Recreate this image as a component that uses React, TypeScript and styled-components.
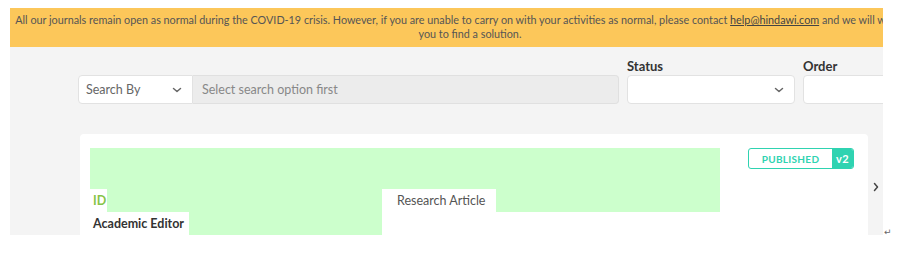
import React from "react";
import styled, { createGlobalStyle } from "styled-components";

const GlobalStyle = createGlobalStyle`
  body {
    margin: 0;
    background: #ffffff;
    font-family: "Lato", "Open Sans", sans-serif;
  }
`;

const Page = styled.div`
  display: flex;
  align-items: flex-end;
  padding: 8px 0 0 10px;
`;

const Frame = styled.div`
  width: 873px;
  height: 227px;
  overflow: hidden;
  background: #f4f4f4;
`;

const ReturnMark = styled.span`
  font-family: "DejaVu Sans", sans-serif;
  font-size: 9px;
  color: #666;
  margin: 0 0 -2px 1px;
`;

const Banner = styled.div`
  width: 920px;
  background: #fcc75a;
  color: #555;
  font-size: 10.8px;
  line-height: 14px;
  text-align: center;
  padding: 5px 0 6px;
  a {
    color: #444;
    text-decoration: underline;
  }
`;

const Filters = styled.div`
  display: flex;
  align-items: flex-end;
  gap: 8px;
  padding: 11px 0 0 68px;
`;

const Field = styled.div`
  display: flex;
  flex-direction: column;
`;

const Label = styled.span`
  font-size: 13px;
  font-weight: 700;
  color: #333;
  margin-bottom: 1px;
`;

const SearchGroup = styled.div`
  display: flex;
`;

const Select = styled.div<{ $width: number; $joined?: boolean }>`
  box-sizing: border-box;
  width: ${(p) => p.$width}px;
  height: 29px;
  background: #fff;
  border: 1px solid #e2e2e2;
  border-radius: ${(p) => (p.$joined ? "4px 0 0 4px" : "4px")};
  display: flex;
  align-items: center;
  justify-content: space-between;
  padding: 0 10px 0 7px;
  font-size: 12.5px;
  color: #666;
`;

const SearchInput = styled.div`
  box-sizing: border-box;
  width: 426px;
  height: 29px;
  background: #ececec;
  border: 1px solid #e0e0e0;
  border-left: none;
  border-radius: 0 4px 4px 0;
  display: flex;
  align-items: center;
  padding-left: 9px;
  font-size: 12.5px;
  color: #888;
`;

const CardRow = styled.div`
  display: flex;
  margin: 30px 0 0 70px;
`;

const Card = styled.div`
  position: relative;
  width: 788px;
  height: 110px;
  background: #fff;
  border-radius: 4px;
  padding: 14px 14px 0 13px;
  box-sizing: border-box;
`;

const Top = styled.div`
  display: flex;
  justify-content: flex-end;
  height: 41px;
`;

const Badge = styled.div`
  display: flex;
  height: 21px;
  box-sizing: border-box;
  border: 1px solid #2fd3b1;
  border-radius: 3px;
  overflow: hidden;
  font-size: 10px;
  font-weight: 700;
  letter-spacing: 0.3px;
`;

const BadgeText = styled.span`
  width: 83px;
  display: flex;
  align-items: center;
  justify-content: center;
  color: #2fd3b1;
`;

const BadgeVersion = styled.span`
  width: 21px;
  display: flex;
  align-items: center;
  justify-content: center;
  background: #2fd3b1;
  color: #fff;
  font-size: 11px;
`;

const InfoRow = styled.div`
  display: flex;
  height: 23px;
  align-items: center;
  font-size: 12.5px;
`;

const IdText = styled.span`
  color: #86c447;
  font-weight: 700;
  width: 304px;
`;

const TypeText = styled.span`
  color: #555;
`;

const EditorText = styled.span`
  color: #333;
  font-weight: 700;
`;

const Redaction = styled.div`
  position: absolute;
  background: #ccffcc;
`;

const Side = styled.div`
  width: 15px;
  display: flex;
  justify-content: center;
  padding-top: 48px;
  color: #444;
`;

const redactions = [
  { left: 10, top: 14, width: 630, height: 41 },
  { left: 27, top: 55, width: 275, height: 23 },
  { left: 416, top: 55, width: 224, height: 23 },
  { left: 109, top: 78, width: 193, height: 26 },
];

const Chevron = ({ down }: { down?: boolean }) => (
  <svg width="10" height="10" viewBox="0 0 10 10" fill="none">
    <path
      d={down ? "M1.5 3.5 L5 6.5 L8.5 3.5" : "M3.5 1.5 L6.5 5 L3.5 8.5"}
      stroke="currentColor"
      strokeWidth="1.5"
      strokeLinecap="round"
      strokeLinejoin="round"
    />
  </svg>
);

export default function App() {
  return (
    <>
      <GlobalStyle />
      <Page>
        <Frame>
          <Banner>
            All our journals remain open as normal during the COVID-19 crisis. However, if you are
            unable to carry on with your activities as normal, please contact{" "}
            <a>help@hindawi.com</a> and we will work with you to find a solution.
          </Banner>
          <Filters>
            <SearchGroup>
              <Select $width={115} $joined>
                <span>Search By</span>
                <Chevron down />
              </Select>
              <SearchInput>Select search option first</SearchInput>
            </SearchGroup>
            <Field>
              <Label>Status</Label>
              <Select $width={168}>
                <span />
                <Chevron down />
              </Select>
            </Field>
            <Field>
              <Label>Order</Label>
              <Select $width={168}>
                <span />
                <Chevron down />
              </Select>
            </Field>
          </Filters>
          <CardRow>
            <Card>
              <Top>
                <Badge>
                  <BadgeText>PUBLISHED</BadgeText>
                  <BadgeVersion>v2</BadgeVersion>
                </Badge>
              </Top>
              <InfoRow>
                <IdText>ID</IdText>
                <TypeText>Research Article</TypeText>
              </InfoRow>
              <InfoRow>
                <EditorText>Academic Editor</EditorText>
              </InfoRow>
              {redactions.map((r, i) => (
                <Redaction key={i} style={r} />
              ))}
            </Card>
            <Side>
              <Chevron />
            </Side>
          </CardRow>
        </Frame>
        <ReturnMark>↵</ReturnMark>
      </Page>
    </>
  );
}
